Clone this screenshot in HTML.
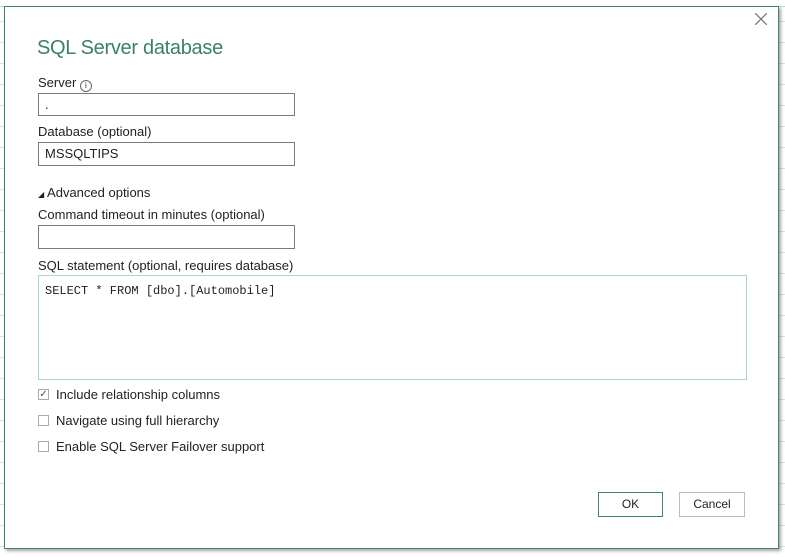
<!DOCTYPE html>
<html><head><style>
body{margin:0;width:785px;height:557px;position:relative;overflow:hidden;background:#fff;font-family:"Liberation Sans",sans-serif;font-size:13px;color:#222;
background-image:linear-gradient(#e2e2e2 1px,transparent 1px);background-size:100% 21px;}
.top{position:absolute;left:0;top:0;width:785px;height:6px;background:#fff;border-bottom:1px solid #ccc}
.dlg{position:absolute;left:4px;top:6px;width:773px;height:541px;background:#fff;border:1px solid #3c8a5c;box-shadow:2px 2px 3px rgba(0,0,0,.35)}
.a{position:absolute}
.inp{position:absolute;border:1px solid #7a7a7a;background:#fff;box-sizing:border-box;padding:3px 6px;font-size:13px}
.cb{position:absolute;left:33px;width:11px;height:11px;border:1px solid #aaa;box-sizing:border-box}
.lbl{position:absolute;left:51px;font-size:13px}
.btn{position:absolute;height:25px;box-sizing:border-box;text-align:center;line-height:23px;font-size:12px;background:#fff}
</style></head><body>
<div class="top"></div>
<div class="dlg">
<svg class="a" style="right:11px;top:6px" width="12" height="12"><path d="M0 0L12 12M12 0L0 12" stroke="#777" stroke-width="1.2"/></svg>
<div class="a" style="left:32px;top:30px;font-size:20px;color:#3b8069;letter-spacing:-0.3px">SQL Server database</div>
<div class="a" style="left:33px;top:68px">Server <span style="display:inline-block;width:10px;height:10px;border:1px solid #666;border-radius:50%;font-size:8px;line-height:10px;text-align:center;vertical-align:-1px">i</span></div>
<div class="inp" style="left:33px;top:86px;width:257px;height:23px">.</div>
<div class="a" style="left:33px;top:117px">Database (optional)</div>
<div class="inp" style="left:33px;top:135px;width:257px;height:24px">MSSQLTIPS</div>
<div class="a" style="left:33px;top:178px"><span style="font-size:8px">◢</span> Advanced options</div>
<div class="a" style="left:33px;top:200px">Command timeout in minutes (optional)</div>
<div class="inp" style="left:33px;top:218px;width:257px;height:24px"></div>
<div class="a" style="left:33px;top:251px">SQL statement (optional, requires database)</div>
<div class="inp" style="left:33px;top:268px;width:709px;height:105px;border-color:#a8d8bd;font-family:'Liberation Mono',monospace;font-size:12px;padding:8px 6px">SELECT * FROM [dbo].[Automobile]</div>
<div class="cb" style="top:382px;font-size:10px;line-height:9px;text-align:center;color:#555">✓</div><div class="lbl" style="top:380px">Include relationship columns</div>
<div class="cb" style="top:408px"></div><div class="lbl" style="top:406px">Navigate using full hierarchy</div>
<div class="cb" style="top:434px"></div><div class="lbl" style="top:432px">Enable SQL Server Failover support</div>
<div class="btn" style="left:593px;top:485px;width:65px;border:1px solid #3c8a5c">OK</div>
<div class="btn" style="left:674px;top:485px;width:66px;border:1px solid #bbb">Cancel</div>
</div>
</body></html>
